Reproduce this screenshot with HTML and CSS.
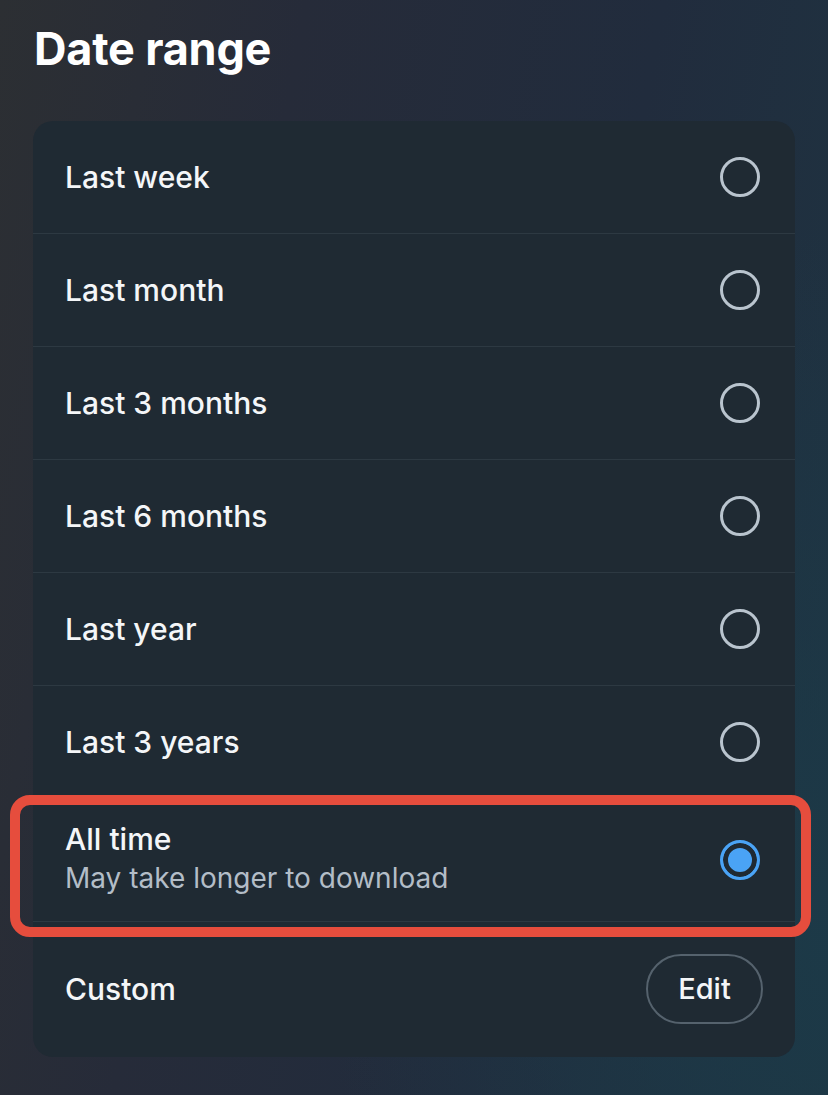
FILE: index.html
```html
<!DOCTYPE html>
<html lang="en">
<head>
<meta charset="utf-8">
<title>Date range</title>
<link rel="stylesheet" href="styles.css">
</head>
<body>
<main class="page">
  <h1 class="title">Date range</h1>
  <section class="card">
    <div class="row">
      <span class="label">Last week</span>
      <span class="radio"></span>
    </div>
    <div class="row">
      <span class="label">Last month</span>
      <span class="radio"></span>
    </div>
    <div class="row">
      <span class="label">Last 3 months</span>
      <span class="radio"></span>
    </div>
    <div class="row">
      <span class="label">Last 6 months</span>
      <span class="radio"></span>
    </div>
    <div class="row">
      <span class="label">Last year</span>
      <span class="radio"></span>
    </div>
    <div class="row">
      <span class="label">Last 3 years</span>
      <span class="radio"></span>
    </div>
    <div class="row row-selected">
      <div class="texts">
        <span class="label">All time</span>
        <span class="sub">May take longer to download</span>
      </div>
      <span class="radio radio-on"></span>
      <span class="highlight"></span>
    </div>
    <div class="row row-custom">
      <span class="label">Custom</span>
      <button class="edit" type="button">Edit</button>
    </div>
  </section>
</main>
</body>
</html>
```
FILE: styles.css
```css
* { box-sizing: border-box; }
html, body { margin: 0; padding: 0; }
body {
  width: 828px;
  height: 1095px;
  overflow: hidden;
  font-family: Inter, "Open Sans", "Liberation Sans", sans-serif;
  color: #f4f6f8;
  background:
    radial-gradient(ellipse 500px 700px at 100% 85%, rgba(28, 58, 72, 0.9), rgba(28, 58, 72, 0) 100%),
    linear-gradient(100deg, #2c2f33 0%, #262b39 30%, #212c3d 65%, #1e3442 100%);
}
.page {
  padding: 22px 0 0 0;
}
.title {
  margin: 0 0 0 34px;
  font-size: 45px;
  line-height: 54px;
  font-weight: 700;
  color: #ffffff;
  letter-spacing: -0.2px;
}
.card {
  margin: 45px 0 0 33px;
  width: 762px;
  background: #1f2a33;
  border-radius: 20px;
}
.row {
  position: relative;
  display: flex;
  align-items: center;
  justify-content: space-between;
  height: 113px;
  padding: 0 35px 0 32px;
  border-bottom: 1px solid #2d3942;
}
.label {
  font-size: 30px;
  line-height: 36px;
  font-weight: 500;
  color: #f4f6f8;
}
.radio {
  width: 40px;
  height: 40px;
  border-radius: 50%;
  border: 3px solid #b9c4ce;
  flex: none;
}
.radio-on {
  border-color: #4aa3f5;
  background: #4aa3f5;
  box-shadow: inset 0 0 0 5px #1f2a33;
}
.row-selected {
  height: 123px;
}
.texts {
  display: flex;
  flex-direction: column;
  gap: 4px;
  padding-bottom: 4px;
}
.sub {
  font-size: 28px;
  line-height: 34px;
  font-weight: 400;
  color: #b3bdc7;
}
.highlight {
  position: absolute;
  left: -23px;
  right: -16px;
  top: -4px;
  bottom: -16px;
  border: 10px solid #e64d3d;
  border-radius: 20px;
  pointer-events: none;
}
.row-custom {
  height: 135px;
  border-bottom: none;
  padding-right: 32px;
  padding-bottom: 2px;
}
.edit {
  width: 117px;
  height: 70px;
  border-radius: 35px;
  border: 2px solid #55626d;
  background: transparent;
  color: #f4f6f8;
  font-family: Inter, "Open Sans", "Liberation Sans", sans-serif;
  font-size: 29px;
  font-weight: 500;
  padding: 0;
}
```
